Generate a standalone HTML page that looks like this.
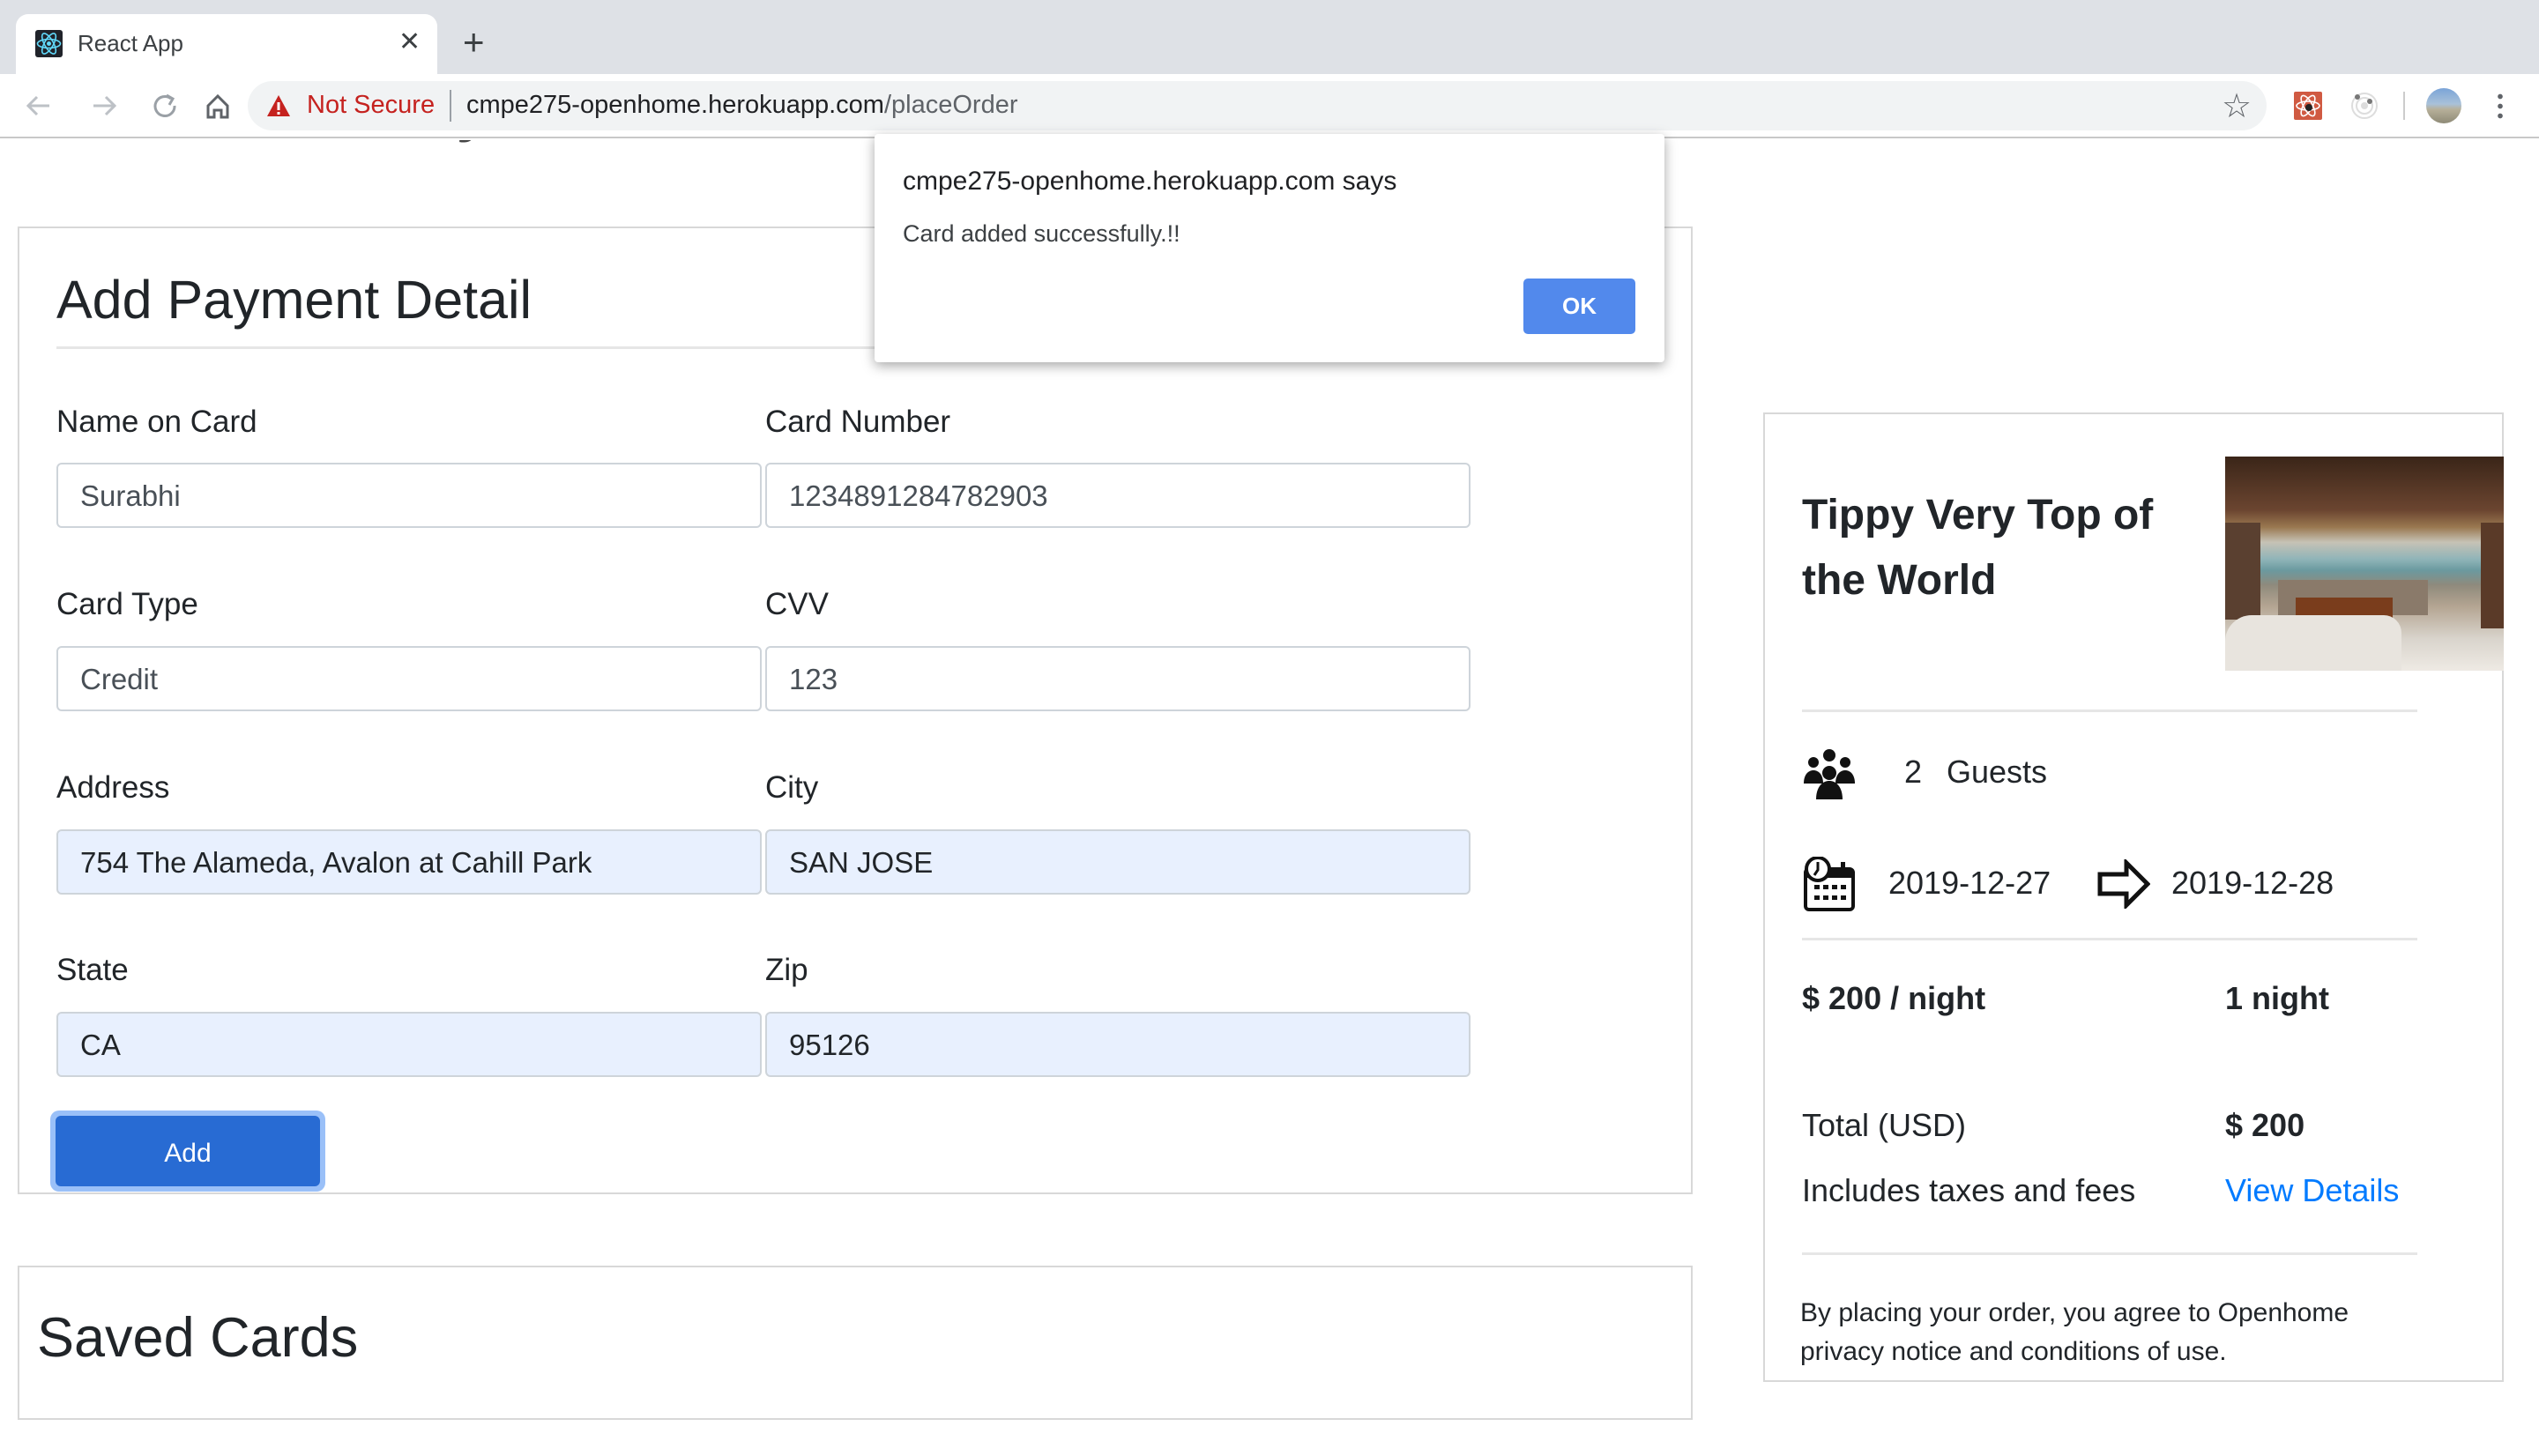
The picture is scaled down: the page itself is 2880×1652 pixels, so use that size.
<!DOCTYPE html>
<html><head><meta charset="utf-8"><style>
*{margin:0;padding:0;box-sizing:border-box}
body{width:2880px;height:1652px;overflow:hidden;background:#fff;font-family:"Liberation Sans",Arial,sans-serif;position:relative;color:#212529}
.a{position:absolute;white-space:nowrap}
.lbl{position:absolute;font-size:35px;color:#212529;line-height:40px}
.inp{position:absolute;height:74px;border:2px solid #ced4da;border-radius:6px;background:#fff;font-size:33px;color:#495057;padding-left:25px;line-height:72px}
.af{background:#e8f0fe;color:#212529}
.hr{position:absolute;height:3px;background:#e6e6e6}
.t36{font-size:36px;line-height:40px}
</style></head><body>
<!-- tab strip -->
<div class="a" style="left:0;top:0;width:2880px;height:84px;background:#dee1e6"></div>
<div class="a" style="left:18px;top:16px;width:478px;height:70px;background:#fff;border-radius:14px 14px 0 0"></div>
<div class="a" style="left:40px;top:34px;width:31px;height:31px;background:#20232a;border-radius:3px"></div>
<svg class="a" style="left:40px;top:34px" width="31" height="31" viewBox="0 0 31 31"><g fill="none" stroke="#61dafb" stroke-width="1.6"><ellipse cx="15.5" cy="15.5" rx="13" ry="5"/><ellipse cx="15.5" cy="15.5" rx="13" ry="5" transform="rotate(60 15.5 15.5)"/><ellipse cx="15.5" cy="15.5" rx="13" ry="5" transform="rotate(120 15.5 15.5)"/></g><circle cx="15.5" cy="15.5" r="2.5" fill="#61dafb"/></svg>
<div class="a" style="left:88px;top:34px;font-size:26px;color:#3c4043">React App</div>
<div class="a" style="left:452px;top:30px;font-size:30px;color:#3c4043">✕</div>
<div class="a" style="left:525px;top:24px;font-size:42px;color:#3c4043;font-weight:300">+</div>
<!-- toolbar -->
<div class="a" style="left:0;top:84px;width:2880px;height:73px;background:#fff;border-bottom:2px solid #c8c8c8"></div>
<svg class="a" style="left:26px;top:102px" width="240" height="36" viewBox="0 0 240 36"><g fill="none" stroke="#bdc1c6" stroke-width="3"><path d="M30 18H6M16 8L6 18l10 10"/><path d="M80 18h24M94 8l10 10-10 10"/></g><g fill="none" stroke="#9aa0a6" stroke-width="3"><path d="M168 10a11 11 0 1 0 4 8"/><path d="M163 6l7 4-4 7"/></g><path d="M210 18l11-11 11 11v13h-7v-8h-8v8h-7z" fill="none" stroke="#5f6368" stroke-width="3"/></svg>
<div class="a" style="left:281px;top:92px;width:2290px;height:56px;background:#f1f3f4;border-radius:28px"></div>
<svg class="a" style="left:302px;top:106px" width="28" height="28" viewBox="0 0 28 28"><path d="M14 2L27 26H1z" fill="#c5221f"/><rect x="12.5" y="10" width="3" height="9" fill="#fff"/><rect x="12.5" y="21" width="3" height="3" fill="#fff"/></svg>
<div class="a" style="left:348px;top:103px;font-size:29px;color:#c5221f">Not Secure</div>
<div class="a" style="left:510px;top:102px;width:2px;height:36px;background:#9aa0a6"></div>
<div class="a" style="left:529px;top:103px;font-size:29px;color:#202124">cmpe275-openhome.herokuapp.com<span style="color:#5f6368">/placeOrder</span></div>
<div class="a" style="left:2520px;top:98px;font-size:38px;color:#5f6368">☆</div>
<div class="a" style="left:2602px;top:104px;width:32px;height:32px;background:#d05a42;border-radius:2px"></div>
<svg class="a" style="left:2602px;top:104px" width="32" height="32" viewBox="0 0 32 32"><g fill="none" stroke="#fff" stroke-width="1.6"><ellipse cx="16" cy="16" rx="13" ry="5"/><ellipse cx="16" cy="16" rx="13" ry="5" transform="rotate(60 16 16)"/><ellipse cx="16" cy="16" rx="13" ry="5" transform="rotate(120 16 16)"/></g><circle cx="17" cy="18" r="4" fill="#222"/></svg>
<svg class="a" style="left:2666px;top:104px" width="32" height="32" viewBox="0 0 32 32"><circle cx="16" cy="16" r="14" fill="none" stroke="#ddd" stroke-width="2"/><circle cx="16" cy="16" r="9" fill="none" stroke="#ddd" stroke-width="2"/><circle cx="16" cy="16" r="4" fill="#ddd"/><circle cx="8" cy="6" r="3" fill="#777"/><circle cx="22" cy="11" r="3" fill="#777"/></svg>
<div class="a" style="left:2726px;top:104px;width:2px;height:32px;background:#ccc"></div>
<div class="a" style="left:2752px;top:100px;width:40px;height:40px;border-radius:50%;background:linear-gradient(#7aa4d8 0,#a9c1d9 45%,#b7b09a 60%,#8e8a76 100%)"></div>
<div class="a" style="left:2833px;top:104px;width:6px;height:32px;background:radial-gradient(circle,#5f6368 2.6px,transparent 3px) 0 0/6px 11px"></div>
<!-- partial heading cut -->
<div class="a" style="left:0;top:159px;width:700px;height:16px;overflow:hidden"><div style="position:absolute;left:30px;top:-72px;font-size:66px;color:#444;font-weight:bold">Confirm and Pay</div></div>
<!-- payment card -->
<div class="a" style="left:20px;top:257px;width:1900px;height:1098px;border:2px solid #d8d8d8"></div>
<div class="a" style="left:64px;top:302px;font-size:61px;line-height:76px;color:#212529">Add Payment Detail</div>
<div class="hr" style="left:64px;top:393px;width:1813px"></div>
<div class="lbl" style="left:64px;top:459px">Name on Card</div>
<div class="lbl" style="left:868px;top:459px">Card Number</div>
<div class="inp" style="left:64px;top:525px;width:800px">Surabhi</div>
<div class="inp" style="left:868px;top:525px;width:800px">1234891284782903</div>
<div class="lbl" style="left:64px;top:666px">Card Type</div>
<div class="lbl" style="left:868px;top:666px">CVV</div>
<div class="inp" style="left:64px;top:733px;width:800px">Credit</div>
<div class="inp" style="left:868px;top:733px;width:800px">123</div>
<div class="lbl" style="left:64px;top:874px">Address</div>
<div class="lbl" style="left:868px;top:874px">City</div>
<div class="inp af" style="left:64px;top:941px;width:800px">754 The Alameda, Avalon at Cahill Park</div>
<div class="inp af" style="left:868px;top:941px;width:800px">SAN JOSE</div>
<div class="lbl" style="left:64px;top:1081px">State</div>
<div class="lbl" style="left:868px;top:1081px">Zip</div>
<div class="inp af" style="left:64px;top:1148px;width:800px">CA</div>
<div class="inp af" style="left:868px;top:1148px;width:800px">95126</div>
<div class="a" style="left:57px;top:1260px;width:312px;height:92px;background:#9ac0f8;border-radius:10px"></div>
<div class="a" style="left:63px;top:1266px;width:300px;height:80px;background:#286bd3;border-radius:6px;color:#fff;font-size:30px;line-height:86px;text-align:center">Add</div>
<!-- saved cards -->
<div class="a" style="left:20px;top:1436px;width:1900px;height:175px;border:2px solid #d8d8d8"></div>
<div class="a" style="left:42px;top:1480px;font-size:63px;line-height:76px">Saved Cards</div>
<!-- right card -->
<div class="a" style="left:2000px;top:468px;width:840px;height:1100px;border:2px solid #d8d8d8"></div>
<div class="a" style="left:2044px;top:548px;font-size:48px;line-height:74px;font-weight:bold;white-space:normal;width:460px">Tippy Very Top of the World</div>
<div class="a" style="left:2524px;top:518px;width:316px;height:243px;overflow:hidden;background:linear-gradient(180deg,#3a2518 0,#6b4530 25%,#9a7850 33%,#c6c2b5 40%,#8fb4b8 48%,#6b9aa0 53%,#8f8a7c 60%,#b4a592 70%,#d9d4cc 85%,#eeeae4 100%)">
<div style="position:absolute;left:0;top:75px;width:40px;height:110px;background:#5a4030"></div>
<div style="position:absolute;left:290px;top:75px;width:26px;height:120px;background:#5a3a28"></div>
<div style="position:absolute;left:60px;top:140px;width:170px;height:40px;background:#8a7a6a"></div>
<div style="position:absolute;left:80px;top:160px;width:110px;height:40px;background:#7a3d1c"></div>
<div style="position:absolute;left:0;top:180px;width:200px;height:63px;background:#e8e4de;border-radius:30px 20px 0 0"></div>
</div>
<div class="hr" style="left:2044px;top:805px;width:698px"></div>
<svg class="a" style="left:2044px;top:849px" width="62" height="58" viewBox="0 0 62 58"><g fill="#111"><circle cx="31" cy="8" r="7"/><circle cx="13" cy="16" r="6"/><circle cx="49" cy="16" r="6"/><path d="M2 40c0-10 5-15 11-15s11 5 11 15z"/><path d="M38 40c0-10 5-15 11-15s11 5 11 15z"/><circle cx="31" cy="28" r="8"/><path d="M16 58c0-14 7-21 15-21s15 7 15 21z"/></g></svg>
<div class="a t36" style="left:2160px;top:856px">2</div>
<div class="a t36" style="left:2208px;top:856px">Guests</div>
<svg class="a" style="left:2044px;top:972px" width="62" height="62" viewBox="0 0 62 62"><rect x="4" y="14" width="54" height="46" rx="4" fill="none" stroke="#111" stroke-width="4"/><rect x="4" y="14" width="54" height="10" fill="#111"/><circle cx="18" cy="14" r="13" fill="#fff" stroke="#111" stroke-width="4"/><path d="M18 6v9l-4 6" stroke="#111" stroke-width="3" fill="none"/><rect x="44" y="6" width="5" height="14" fill="#111"/><g fill="#111"><rect x="14" y="32" width="6" height="5"/><rect x="24" y="32" width="6" height="5"/><rect x="34" y="32" width="6" height="5"/><rect x="44" y="32" width="6" height="5"/><rect x="14" y="44" width="6" height="5"/><rect x="24" y="44" width="6" height="5"/><rect x="34" y="44" width="6" height="5"/><rect x="44" y="44" width="6" height="5"/></g></svg>
<div class="a t36" style="left:2142px;top:982px">2019-12-27</div>
<svg class="a" style="left:2379px;top:975px" width="60" height="56" viewBox="0 0 60 56"><path d="M3 17h30V4l24 24-24 24V39H3z" fill="#fff" stroke="#111" stroke-width="5" stroke-linejoin="miter"/></svg>
<div class="a t36" style="left:2463px;top:982px">2019-12-28</div>
<div class="hr" style="left:2044px;top:1064px;width:698px"></div>
<div class="a t36" style="left:2044px;top:1113px;font-weight:bold">$ 200 / night</div>
<div class="a t36" style="left:2524px;top:1113px;font-weight:bold">1 night</div>
<div class="a t36" style="left:2044px;top:1257px">Total (USD)</div>
<div class="a t36" style="left:2524px;top:1257px;font-weight:bold">$ 200</div>
<div class="a t36" style="left:2044px;top:1331px">Includes taxes and fees</div>
<div class="a t36" style="left:2524px;top:1331px;color:#007bff">View Details</div>
<div class="hr" style="left:2044px;top:1421px;width:698px"></div>
<div class="a" style="left:2042px;top:1468px;font-size:30px;line-height:44px">By placing your order, you agree to Openhome<br>privacy notice and conditions of use.</div>
<!-- dialog -->
<div class="a" style="left:992px;top:152px;width:896px;height:259px;background:#fff;border-radius:4px;box-shadow:0 4px 14px rgba(0,0,0,.35)"></div>
<div class="a" style="left:1024px;top:189px;font-size:30px;color:#202124">cmpe275-openhome.herokuapp.com says</div>
<div class="a" style="left:1024px;top:250px;font-size:27px;color:#3c4043">Card added successfully.!!</div>
<div class="a" style="left:1728px;top:316px;width:127px;height:63px;background:#5289ec;border-radius:5px;color:#fff;font-size:26px;font-weight:bold;line-height:63px;text-align:center">OK</div>
</body></html>
